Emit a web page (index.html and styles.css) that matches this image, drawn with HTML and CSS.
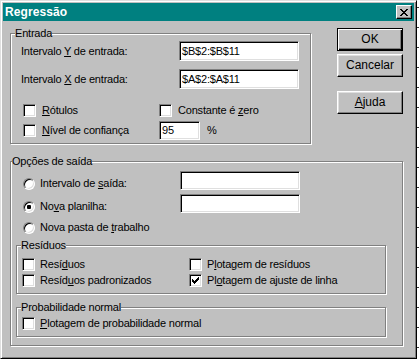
FILE: index.html
```
<html lang="pt">
<head>
    <meta charset="UTF-8">
    <title>Regressão</title>
    <link rel="stylesheet" href="styles.css">
</head>
<body>
    <div class="window">
        <div class="titlebar">
            <span class="title">Regressão</span>
            <span class="close">
                <svg width="8" height="7" viewBox="0 0 8 7" shape-rendering="crispEdges"><path fill="#000" d="M0 0h2v1H0z M6 0h2v1H6z M1 1h2v1H1z M5 1h2v1H5z M2 2h4v1H2z M3 3h2v1H3z M2 4h4v1H2z M1 5h2v1H1z M5 5h2v1H5z M0 6h2v1H0z M6 6h2v1H6z"/></svg>
            </span>
        </div>

        <div class="content">
            <div class="top">
                <div class="group entrada">
                    <div class="legend">Entrada</div>
                    <div class="row r1">
                        <span class="lbl">Intervalo <u>Y</u> de entrada:</span>
                        <input class="field wide" type="text" value="$B$2:$B$11">
                    </div>
                    <div class="row r2">
                        <span class="lbl">Intervalo <u>X</u> de entrada:</span>
                        <input class="field wide" type="text" value="$A$2:$A$11">
                    </div>
                    <div class="row r3">
                        <span class="check-item first"><span class="check"></span><span><u>R</u>ótulos</span></span>
                        <span class="check-item"><span class="check"></span><span>Constante é <u>z</u>ero</span></span>
                    </div>
                    <div class="row r4">
                        <span class="check-item first"><span class="check"></span><span><u>N</u>ível de confiança</span></span>
                        <input class="field small" type="text" value="95">
                        <span class="pct">%</span>
                    </div>
                </div>

                <div class="buttons">
                    <button class="btn default">OK</button>
                    <button class="btn">Cancelar</button>
                    <button class="btn help"><u>A</u>juda</button>
                </div>
            </div>

            <div class="group saida">
                <div class="legend">Opções de saída</div>
                <div class="out-row o1">
                    <span class="radio-item"><span class="radio"></span><span>Intervalo de <u>s</u>aída:</span></span>
                    <input class="field wide" type="text" value="">
                </div>
                <div class="out-row o2">
                    <span class="radio-item"><span class="radio on"></span><span>No<u>v</u>a planilha:</span></span>
                    <input class="field wide" type="text" value="">
                </div>
                <div class="out-row o3">
                    <span class="radio-item"><span class="radio"></span><span>Nova pasta de <u>t</u>rabalho</span></span>
                </div>

                <div class="group sub residuos">
                    <div class="legend">Resíduos</div>
                    <div class="grid">
                        <span class="check-item"><span class="check"></span><span>Resí<u>d</u>uos</span></span>
                        <span class="check-item"><span class="check"></span><span>P<u>l</u>otagem de resíduos</span></span>
                        <span class="check-item"><span class="check"></span><span>Resíd<u>u</u>os padronizados</span></span>
                        <span class="check-item"><span class="check"><svg width="7" height="7" viewBox="0 0 7 7" shape-rendering="crispEdges"><path fill="#000" d="M6 0h1v1H6z M5 1h2v1H5z M0 2h1v1H0z M4 2h3v1H4z M0 3h2v1H0z M3 3h3v1H3z M0 4h5v1H0z M1 5h3v1H1z M2 6h1v1H2z"/></svg></span><span>Pl<u>o</u>tagem de ajuste de linha</span></span>
                    </div>
                </div>

                <div class="group sub prob">
                    <div class="legend">Probabilidade normal</div>
                    <div class="grid single">
                        <span class="check-item"><span class="check"></span><span><u>P</u>lotagem de probabilidade normal</span></span>
                    </div>
                </div>
            </div>
        </div>
    </div>
</body>
</html>
```

FILE: styles.css
```
body {
    margin: 0;
    background-color: #fff;
    background-image: repeating-linear-gradient(to bottom, #fff 0 7px, #404040 7px 8px, #fff 8px 20px);
    color: #000;
    font-family: "Liberation Sans", Arial, sans-serif;
    font-size: 11px;
    letter-spacing: -0.2px;
    line-height: 15px;
    overflow: hidden;
}

u {
    text-decoration: underline;
    text-underline-offset: 1px;
}

/* window frame */
.window {
    width: 417px;
    height: 359px;
    box-sizing: border-box;
    background: #c0c0c0;
    border: 1px solid;
    border-color: #dfdfdf #000 #000 #dfdfdf;
    box-shadow: inset 1px 1px #fff, inset -1px -1px #808080;
    padding: 2px;
}

.titlebar {
    height: 18px;
    background: #008080;
    display: flex;
    align-items: center;
    justify-content: space-between;
    padding: 0 2px;
}

.title {
    color: #fff;
    font-weight: bold;
    font-size: 12px;
    letter-spacing: 0.1px;
}

.close {
    width: 16px;
    height: 14px;
    box-sizing: border-box;
    background: #c0c0c0;
    border: 1px solid;
    border-color: #fff #000 #000 #fff;
    box-shadow: inset -1px -1px #808080;
    display: flex;
    align-items: center;
    justify-content: center;
}

.content {
    padding: 7px 0 0 7px;
}

.top {
    display: flex;
    align-items: flex-start;
}

/* etched group boxes */
.group {
    box-sizing: border-box;
    border: 1px solid #808080;
    box-shadow: inset 1px 1px #fff, 1px 1px #fff;
}

.legend {
    width: fit-content;
    height: 15px;
    margin: -8px 0 0 4px;
    background: #c0c0c0;
}

.entrada {
    width: 301px;
    height: 111px;
    margin-top: 5px;
}

.row {
    display: flex;
    align-items: center;
    height: 20px;
}

.r1 { margin-top: 0; }
.r2 { margin-top: 8px; }
.r3 { margin-top: 11px; }

.lbl {
    margin-left: 10px;
    width: 158px;
}

.field {
    box-sizing: border-box;
    height: 20px;
    margin: 0;
    padding: 0 2px;
    border: 1px solid;
    border-color: #808080 #fff #fff #808080;
    box-shadow: inset 1px 1px #000, inset -1px -1px #dfdfdf;
    background: #fff;
    font: inherit;
    letter-spacing: inherit;
    color: #000;
    outline: none;
}

.wide { width: 120px; }

.small {
    width: 41px;
    height: 19px;
}

.pct { margin-left: 7px; }

.check-item {
    display: flex;
    align-items: center;
    gap: 5px;
    white-space: nowrap;
}

.entrada .check-item { gap: 6px; }

.first {
    margin-left: 12px;
    width: 136px;
}

.check {
    flex: none;
    width: 13px;
    height: 13px;
    box-sizing: border-box;
    border: 1px solid;
    border-color: #808080 #fff #fff #808080;
    box-shadow: inset 1px 1px #000, inset -1px -1px #dfdfdf;
    background: #fff;
    display: flex;
    align-items: center;
    justify-content: center;
}

/* buttons */
.buttons {
    margin-left: 26px;
    display: flex;
    flex-direction: column;
}

.btn {
    width: 66px;
    height: 23px;
    box-sizing: border-box;
    margin: 0;
    padding: 0;
    background: #c0c0c0;
    border: 1px solid;
    border-color: #fff #000 #000 #fff;
    box-shadow: inset -1px -1px #808080, inset 1px 1px #dfdfdf;
    font: inherit;
    font-size: 12px;
    color: #000;
}

.btn + .btn { margin-top: 3px; }
.btn.help { margin-top: 14px; }

.btn.default {
    border-color: #000;
    box-shadow: inset 1px 1px #fff, inset -1px -1px #000, inset -2px -2px #808080;
}

/* output options */
.saida {
    width: 393px;
    height: 185px;
    margin-top: 17px;
}

.saida > .legend { margin-left: 1px; }

.out-row {
    display: flex;
    align-items: flex-start;
}

.o1 { margin-top: 2px; }
.o2 { margin-top: 4px; }
.o3 { margin-top: 8px; }

.saida .field { height: 19px; }

.radio-item {
    display: flex;
    align-items: center;
    gap: 5px;
    width: 157px;
    height: 13px;
    margin: 6px 0 0 12px;
    white-space: nowrap;
}

.o3 .radio-item { margin-top: 0; }

.radio {
    flex: none;
    width: 12px;
    height: 12px;
    box-sizing: border-box;
    border-radius: 50%;
    border: 1px solid;
    border-color: #808080 #fff #fff #808080;
    box-shadow: inset 1px 1px #000, inset -1px -1px #dfdfdf;
    background: #fff;
    display: flex;
    align-items: center;
    justify-content: center;
}

.radio.on::after {
    content: "";
    width: 4px;
    height: 4px;
    border-radius: 1px;
    background: #000;
}

.sub {
    width: 370px;
    margin-left: 5px;
}

.residuos {
    height: 49px;
    margin-top: 11px;
}

.prob {
    height: 30px;
    margin-top: 13px;
}

.grid {
    display: grid;
    grid-template-columns: 167px auto;
    grid-auto-rows: 16px;
    margin: 3px 0 0 5px;
}

.grid.single {
    grid-template-columns: auto;
    margin-top: 0;
}
```
